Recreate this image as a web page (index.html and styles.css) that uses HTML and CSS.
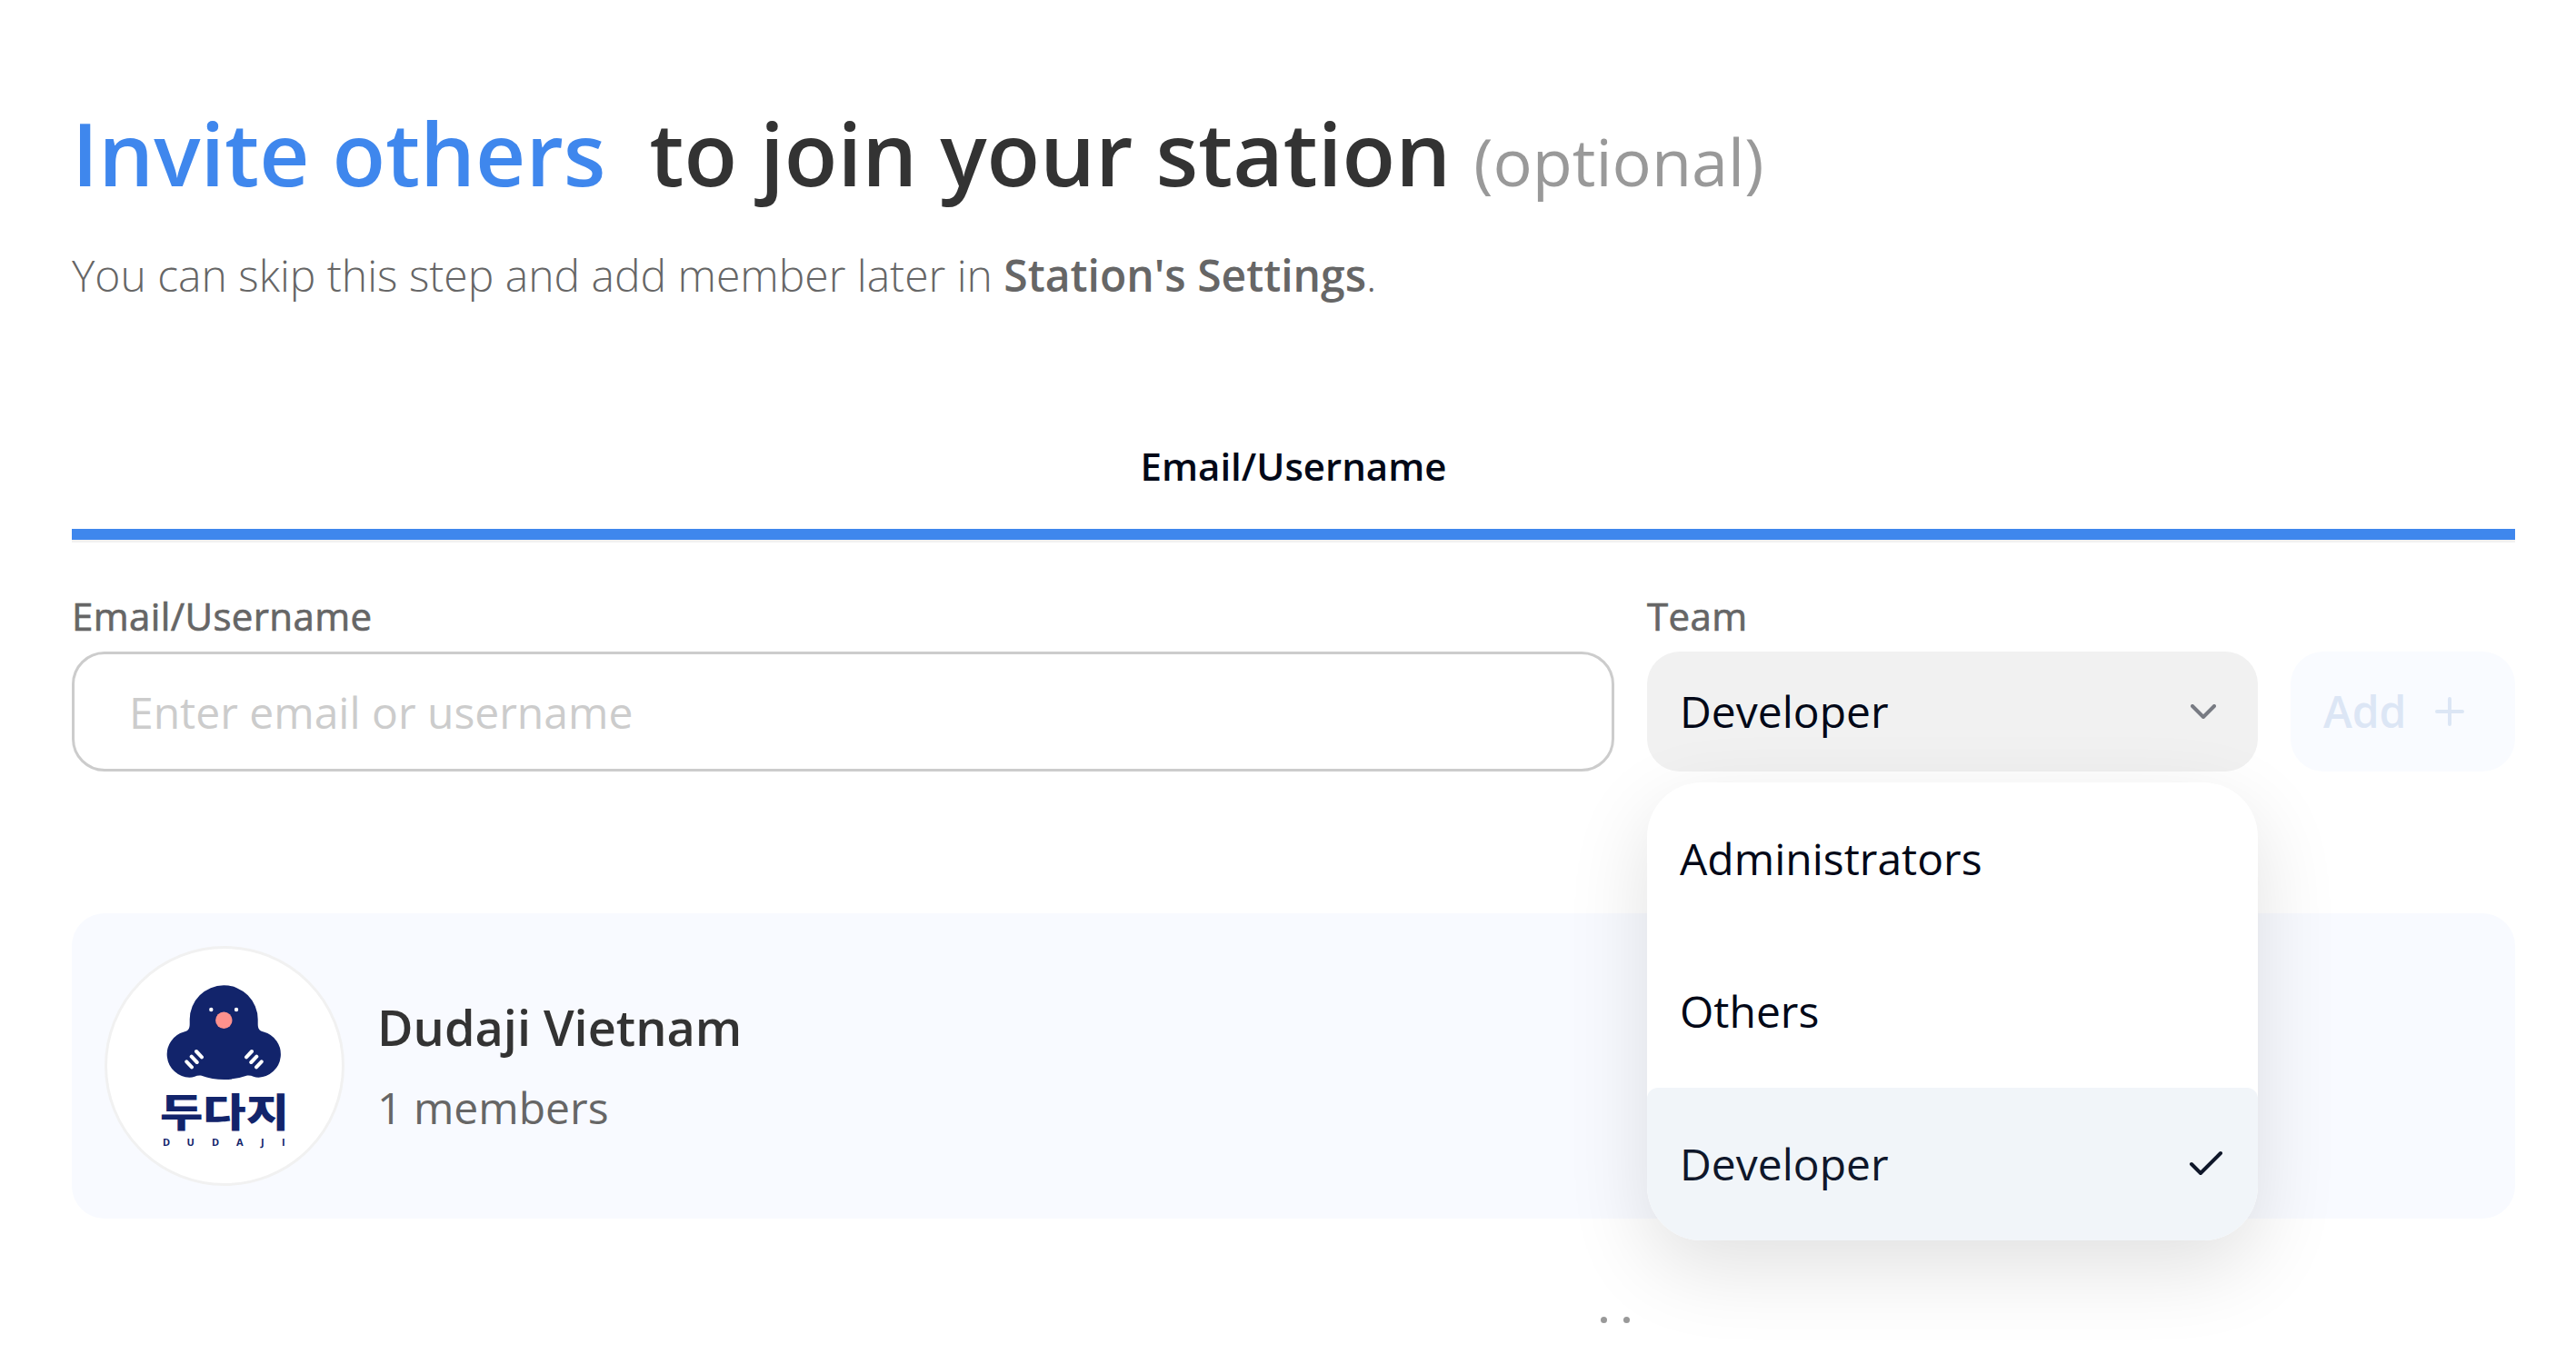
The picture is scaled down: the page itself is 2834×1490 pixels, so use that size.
FILE: index.html
```html
<!DOCTYPE html>
<html lang="en">
<head>
<meta charset="utf-8">
<title>Invite others</title>
<link rel="stylesheet" href="styles.css">
</head>
<body>
<main class="page">
  <h1 class="title"><span class="accent">Invite others</span><span class="rest">to join your station</span><span class="optional">(optional)</span></h1>
  <p class="subtitle">You can skip this step and add member later in <strong>Station's Settings</strong>.</p>
  <div class="tabs"><div class="tab">Email/Username</div></div>
  <form class="form">
    <div class="field field-email">
      <label class="label" for="email">Email/Username</label>
      <input class="input" id="email" type="text" placeholder="Enter email or username">
    </div>
    <div class="field field-team">
      <span class="label">Team</span>
      <div class="select">
        <span>Developer</span>
        <svg class="chevron" viewBox="0 0 48 48"><path d="M12 18l12 12 12-12"/></svg>
        <ul class="menu">
          <li class="option">Administrators</li>
          <li class="option">Others</li>
          <li class="option selected">Developer
            <svg class="check" viewBox="0 0 48 48"><path d="M43 12L21 34 11 24"/></svg>
          </li>
        </ul>
      </div>
    </div>
    <button class="add" type="button">Add
      <svg class="plus" viewBox="0 0 36 36"><path d="M18 4v28M4 18h28"/></svg>
    </button>
  </form>
  <section class="card">
    <div class="avatar">
      <svg class="logo" viewBox="0 0 264 264">
        <path fill="#12246b" d="M93.700 80.800A37.500 37.500 0 0 1 168.700 80.800V86C168.700 91 170.500 93.500 175 94.600A25.500 25.500 0 0 1 169.500 144.700C165 144.700 162 142 157 142.500Q131.500 151.500 106 142.500C101 142 98 144.700 93.500 144.700A25.500 25.500 0 0 1 87.500 94.600C92 93.500 93.700 91 93.700 86Z"/>
        <g fill="#fff"><circle cx="117.300" cy="70" r="2.200"/><circle cx="145" cy="70" r="2.200"/></g>
        <circle cx="131.300" cy="81.700" r="9.200" fill="#fe918d"/>
        <path d="M90.300 127.300l5.700 6M95.700 121.700l6 6.300M101 116l6 6.300M172.700 127.300l-5.700 6M167.300 121.700l-6 6.300M162 116l-6 6.300" stroke="#fff" stroke-width="4" stroke-linecap="round"/>
        <text class="logo-name" x="132" y="198.500" textLength="142" lengthAdjust="spacingAndGlyphs">두다지</text>
        <text class="logo-sub" x="64" y="219.700">D</text><text class="logo-sub" x="90.500" y="219.700">U</text><text class="logo-sub" x="118" y="219.700">D</text><text class="logo-sub" x="145" y="219.700">A</text><text class="logo-sub" x="172" y="219.700">J</text><text class="logo-sub" x="195" y="219.700">I</text>
      </svg>
    </div>
    <div class="info">
      <div class="name">Dudaji Vietnam</div>
      <div class="members">1 members</div>
    </div>
  </section>
  <div class="dots"><i></i><i></i></div>
</main>
</body>
</html>
```
FILE: styles.css
```css
* { box-sizing: border-box; }
body { margin: 0; background: #fff; font-family: "Open Sans", "Noto Sans", sans-serif; color: #020817; overflow: hidden; }
.page { width: 2834px; height: 1490px; padding: 96px 67px 0 79px; display: flex; flex-direction: column; overflow: hidden; }
.title { margin: 0; display: flex; align-items: baseline; height: 144px; font-size: 96px; line-height: 144px; font-weight: 600; color: #333; white-space: nowrap; }
.accent { color: #3f87ed; }
.rest { margin-left: 48px; }
.optional { margin-left: 25px; font-size: 72px; font-weight: 400; color: #999; }
.subtitle { margin: 27px 0 0; font-size: 48px; line-height: 72px; font-weight: 300; color: #666; }
.subtitle strong { font-weight: 600; }
.tabs { margin-top: 107px; height: 151px; border-bottom: 3px solid #f1f1f1; }
.tab { height: 148px; padding-top: 37px; border-bottom: 12px solid #3f87ed; text-align: center; font-size: 42px; line-height: 60px; font-weight: 600; }
.form { display: flex; align-items: flex-end; gap: 36px; margin-top: 52px; height: 200px; }
.field { display: flex; flex-direction: column; gap: 9px; }
.field-email { flex: 1; }
.field-team { width: 672px; }
.label { font-size: 42px; line-height: 60px; letter-spacing: .38px; -webkit-text-stroke: .7px #666; color: #666; }
.input { height: 132px; width: 100%; border: 3px solid #ccc; border-radius: 36px; padding: 0 60px; font: 400 48px/72px "Open Sans", sans-serif; background: #fff; }
.input::placeholder { color: #ccc; opacity: 1; }
.select { position: relative; display: flex; align-items: center; justify-content: space-between; height: 132px; padding: 0 36px; border-radius: 36px; background: #f1f1f1; font-size: 48px; line-height: 72px; }
.chevron, .check, .plus { width: 48px; height: 48px; fill: none; stroke: currentColor; stroke-width: 4; stroke-linecap: round; stroke-linejoin: round; }
.chevron { opacity: .5; }
.menu { position: absolute; z-index: 2; left: 0; top: 144px; width: 672px; margin: 0; padding: 0; list-style: none; background: #fff; border-radius: 60px; overflow: hidden; box-shadow: 0 30px 90px rgba(0, 0, 0, .12); }
.option { display: flex; align-items: center; justify-content: space-between; height: 168px; padding: 0 36px; }
.option.selected { background: #f1f5f9; color: #0f172a; border-radius: 12px; }
.add { display: flex; align-items: center; justify-content: space-between; width: 247px; height: 132px; padding: 0 54px 0 36px; border: 0; border-radius: 36px; background: #f9fbff; color: #dce6f5; font: 600 48px/72px "Open Sans", sans-serif; }
.plus { width: 36px; height: 36px; }
.card { display: flex; align-items: center; gap: 36px; margin-top: 156px; height: 336px; padding: 36px; border-radius: 36px; background: #f8faff; }
.avatar { width: 264px; height: 264px; border: 3px solid #f1f1f1; border-radius: 50%; background: #fff; overflow: hidden; }
.logo { display: block; width: 264px; height: 264px; margin: -3px; }
.logo-name { font: 900 43px "Noto Sans CJK KR", sans-serif; text-anchor: middle; fill: #12246b; }
.logo-sub { font: 700 11px "Open Sans", sans-serif; fill: #12246b; }
.info { padding-bottom: 3px; }
.name { font-size: 54px; line-height: 84px; font-weight: 600; color: #333; }
.members { font-size: 48px; line-height: 72px; color: #666; margin-top: 11px; }
.dots { display: flex; gap: 18px; margin: 108px 0 0 1682px; }
.dots i { width: 7px; height: 7px; border-radius: 50%; background: #999; }
```
